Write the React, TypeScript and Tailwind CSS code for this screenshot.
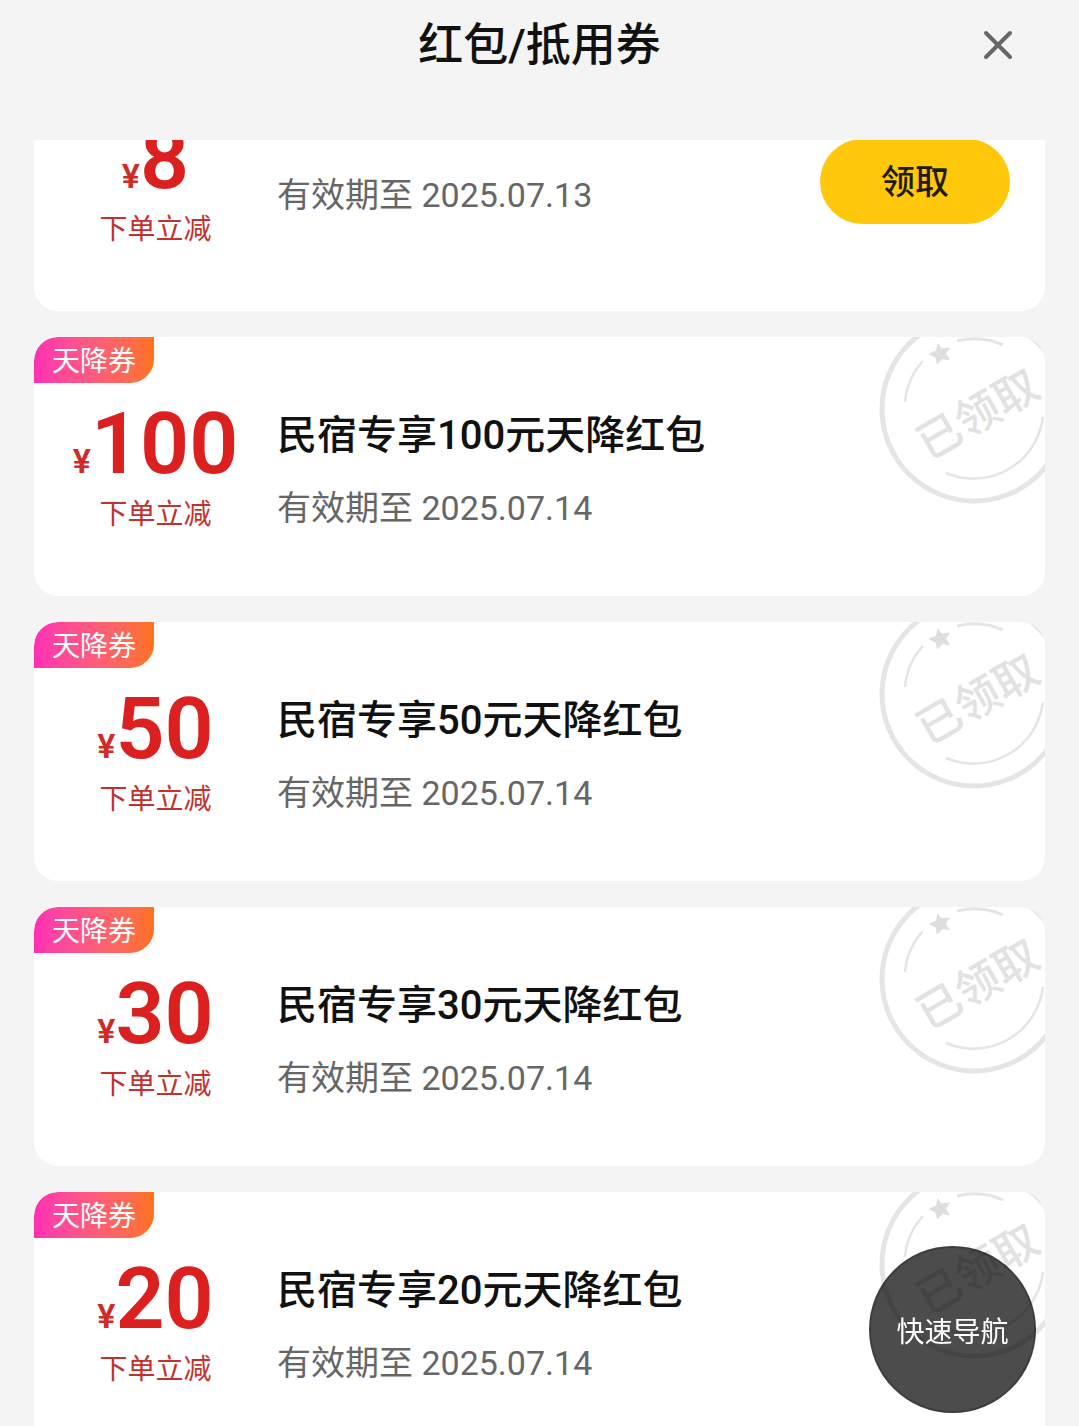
import { useLayoutEffect, useRef, useState } from "react";

type Coupon = {
  id: number;
  amount: number;
  title: string;
  expires: string;
  tag?: string;
  claimed: boolean;
};

const initialCoupons: Coupon[] = [
  { id: 1, amount: 8, title: "民宿专享8元红包", expires: "2025.07.13", claimed: false },
  { id: 2, amount: 100, title: "民宿专享100元天降红包", expires: "2025.07.14", tag: "天降券", claimed: true },
  { id: 3, amount: 50, title: "民宿专享50元天降红包", expires: "2025.07.14", tag: "天降券", claimed: true },
  { id: 4, amount: 30, title: "民宿专享30元天降红包", expires: "2025.07.14", tag: "天降券", claimed: true },
  { id: 5, amount: 20, title: "民宿专享20元天降红包", expires: "2025.07.14", tag: "天降券", claimed: true },
];

function ClaimedStamp() {
  return (
    <svg
      className="absolute top-0 right-0 size-[170px]"
      viewBox="0 0 170 170"
      fill="none"
      stroke="#e5e5e5"
      role="img"
      aria-label="已领取"
    >
      <circle cx="99" cy="72" r="92" strokeWidth="5" />
      <path d="M30 65A69 69 0 0 1 48 24" strokeWidth="2.5" />
      <path d="M82 4A69 69 0 0 1 128 8" strokeWidth="3" />
      <path d="M168 80A70 70 0 0 1 71 136" strokeWidth="2.5" />
      <path
        d="M62.5 6L66.5 11.5L75 10.5L71 16.5L75 23.5L67.5 22L62 27.5L60.5 20.5L53.5 17L61 13.5Z"
        fill="#dedede"
        stroke="none"
      />
      <text
        x="102"
        y="76"
        transform="rotate(-30 102 76)"
        dy="17"
        textAnchor="middle"
        fontSize="44"
        fontWeight="500"
        fill="#e2e2e2"
        stroke="none"
      >
        已领取
      </text>
    </svg>
  );
}

function CouponCard({ coupon, onClaim }: { coupon: Coupon; onClaim: (id: number) => void }) {
  const { id, amount, title, expires, tag, claimed } = coupon;

  return (
    <li className="relative flex h-[259px] shrink-0 items-center overflow-hidden rounded-3xl bg-white">
      {tag && (
        <span className="absolute top-0 left-0 h-[46px] rounded-tl-3xl rounded-br-3xl bg-linear-to-r from-[#ff2eb4] to-[#ff7312] px-[18px] text-[28px]/[50px] text-white">
          {tag}
        </span>
      )}
      {claimed && <ClaimedStamp />}
      <div className="w-[243px] shrink-0 pt-3 text-center">
        <p className="text-[86px]/[68px] font-semibold text-[#dc201f]">
          <span className="text-[34px] text-[#cf2b29]">¥</span>
          {amount}
        </p>
        <p className="text-[28px]/[40px] text-[#c4302d]">下单立减</p>
      </div>
      <div className={`flex min-w-0 flex-1 flex-col pt-1.5 ${tag ? "gap-5" : "gap-7 pb-16"}`}>
        <h2 className="text-[40px]/[56px] font-medium text-[#111]">{title}</h2>
        <p className="text-[34px]/[48px] text-[#666]">有效期至 {expires}</p>
      </div>
      {!claimed && (
        <button
          type="button"
          onClick={() => onClaim(id)}
          className="mr-[35px] h-[85px] w-[190px] rounded-full bg-[#ffc80a] pt-0.5 text-[34px] font-medium text-[#221a0a]"
        >
          领取
        </button>
      )}
    </li>
  );
}

export default function App() {
  const [coupons, setCoupons] = useState(initialCoupons);
  const listRef = useRef<HTMLElement>(null);

  // open with the list already scrolled into the first coupon
  useLayoutEffect(() => {
    listRef.current?.scrollTo(0, 88);
  }, []);

  const handleClaim = (id: number) => {
    setCoupons((prev) => prev.map((c) => (c.id === id ? { ...c, claimed: true } : c)));
  };

  return (
    <div className="flex h-screen flex-col bg-[#f4f4f4] font-[Roboto,'Noto_Sans_CJK_SC',sans-serif]">
      <header className="relative flex h-[140px] shrink-0 items-start justify-center pt-3.5">
        <h1 className="text-[45px]/[64px] font-medium text-[#111]">红包/抵用券</h1>
        <button type="button" aria-label="关闭" className="absolute top-[25px] right-[61px] size-10">
          <svg viewBox="0 0 40 40" fill="none" stroke="#666" strokeWidth="4" strokeLinecap="round">
            <path d="M8 8L32 32M32 8L8 32" />
          </svg>
        </button>
      </header>
      <main ref={listRef} className="min-h-0 flex-1 overflow-y-auto px-[34px] [scrollbar-width:none]">
        <ul className="flex flex-col gap-[26px]">
          {coupons.map((coupon) => (
            <CouponCard key={coupon.id} coupon={coupon} onClaim={handleClaim} />
          ))}
        </ul>
      </main>
      <button
        type="button"
        className="fixed right-[43px] bottom-[13px] size-[167px] rounded-full border-2 border-black/20 bg-black/70 pt-1.5 text-[28px] text-white"
      >
        快速导航
      </button>
    </div>
  );
}
